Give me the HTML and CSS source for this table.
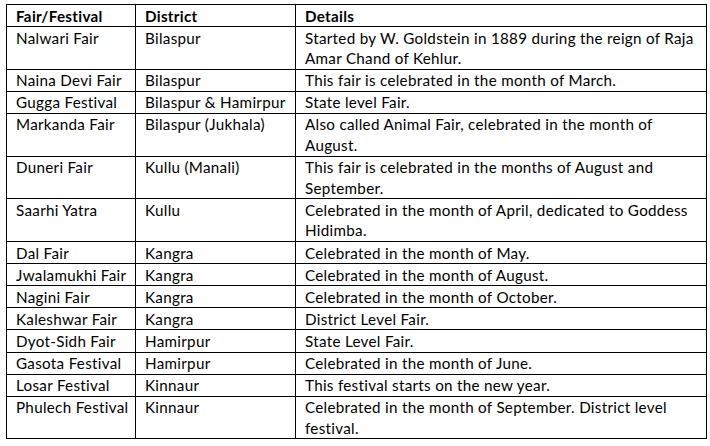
FILE: index.html
```html
<!DOCTYPE html>
<html>
<head>
<meta charset="utf-8">
<link rel="stylesheet" href="styles.css">
</head>
<body>
<table class="fairs">
  <colgroup>
    <col class="c1"><col class="c2"><col class="c3">
  </colgroup>
  <thead>
    <tr><th>Fair/Festival</th><th>District</th><th>Details</th></tr>
  </thead>
  <tbody>
    <tr><td>Nalwari Fair</td><td>Bilaspur</td><td>Started by W. Goldstein in 1889 during the reign of Raja<br>Amar Chand of Kehlur.</td></tr>
    <tr><td>Naina Devi Fair</td><td>Bilaspur</td><td>This fair is celebrated in the month of March.</td></tr>
    <tr><td>Gugga Festival</td><td>Bilaspur &amp; Hamirpur</td><td>State level Fair.</td></tr>
    <tr><td>Markanda Fair</td><td>Bilaspur (Jukhala)</td><td>Also called Animal Fair, celebrated in the month of<br>August.</td></tr>
    <tr><td>Duneri Fair</td><td>Kullu (Manali)</td><td>This fair is celebrated in the months of August and<br>September.</td></tr>
    <tr><td>Saarhi Yatra</td><td>Kullu</td><td>Celebrated in the month of April, dedicated to Goddess<br>Hidimba.</td></tr>
    <tr><td>Dal Fair</td><td>Kangra</td><td>Celebrated in the month of May.</td></tr>
    <tr><td>Jwalamukhi Fair</td><td>Kangra</td><td>Celebrated in the month of August.</td></tr>
    <tr><td>Nagini Fair</td><td>Kangra</td><td>Celebrated in the month of October.</td></tr>
    <tr><td>Kaleshwar Fair</td><td>Kangra</td><td>District Level Fair.</td></tr>
    <tr><td>Dyot-Sidh Fair</td><td>Hamirpur</td><td>State Level Fair.</td></tr>
    <tr><td>Gasota Festival</td><td>Hamirpur</td><td>Celebrated in the month of June.</td></tr>
    <tr><td>Losar Festival</td><td>Kinnaur</td><td>This festival starts on the new year.</td></tr>
    <tr><td>Phulech Festival</td><td>Kinnaur</td><td>Celebrated in the month of September. District level<br>festival.</td></tr>
  </tbody>
</table>
</body>
</html>
```

FILE: styles.css
```css
html, body {
  margin: 0;
  padding: 0;
  background: #ffffff;
}
body {
  padding: 4px 0 0 6px;
}
.fairs {
  border-collapse: collapse;
  table-layout: fixed;
  width: 700px;
  font-family: "Lato", "Liberation Sans", sans-serif;
  font-size: 15.2px;
  letter-spacing: 0.3px;
  color: #000000;
}
.c1 { width: 129px; }
.c2 { width: 160px; }
.c3 { width: 411px; }
.fairs th,
.fairs td {
  border: 1px solid #000000;
  padding: 0.5px 6px 0 9px;
  line-height: 20.6px;
  text-align: left;
  vertical-align: top;
  white-space: nowrap;
}
.fairs th {
  font-weight: bold;
}
```
